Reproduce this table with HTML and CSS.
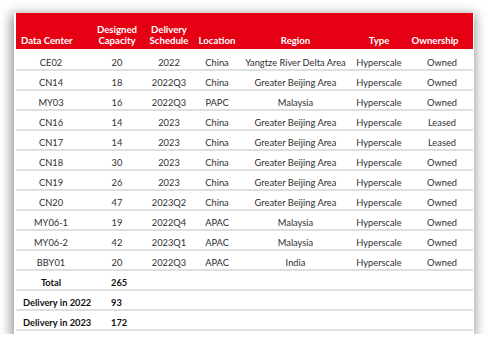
FILE: index.html
```html
<!DOCTYPE html>
<html lang="en">
<head>
    <meta charset="UTF-8">
    <title>Data Center Pipeline</title>
    <link rel="stylesheet" href="styles.css">
</head>
<body>
    <div class="sheet">
        <table class="dc-table">
            <colgroup>
                <col class="c-name">
                <col class="c-cap">
                <col class="c-sched">
                <col class="c-loc">
                <col class="c-region">
                <col class="c-type">
                <col class="c-own">
            </colgroup>
            <thead>
                <tr>
                    <th class="th-left">Data Center</th>
                    <th>Designed<br>Capacity</th>
                    <th>Delivery<br>Schedule</th>
                    <th>Location</th>
                    <th>Region</th>
                    <th>Type</th>
                    <th class="th-own">Ownership</th>
                </tr>
            </thead>
            <tbody>
                <tr><td>CE02</td><td>20</td><td>2022</td><td>China</td><td>Yangtze River Delta Area</td><td>Hyperscale</td><td>Owned</td></tr>
                <tr><td>CN14</td><td>18</td><td>2022Q3</td><td>China</td><td>Greater Beijing Area</td><td>Hyperscale</td><td>Owned</td></tr>
                <tr><td>MY03</td><td>16</td><td>2022Q3</td><td>PAPC</td><td>Malaysia</td><td>Hyperscale</td><td>Owned</td></tr>
                <tr><td>CN16</td><td>14</td><td>2023</td><td>China</td><td>Greater Beijing Area</td><td>Hyperscale</td><td>Leased</td></tr>
                <tr><td>CN17</td><td>14</td><td>2023</td><td>China</td><td>Greater Beijing Area</td><td>Hyperscale</td><td>Leased</td></tr>
                <tr><td>CN18</td><td>30</td><td>2023</td><td>China</td><td>Greater Beijing Area</td><td>Hyperscale</td><td>Owned</td></tr>
                <tr><td>CN19</td><td>26</td><td>2023</td><td>China</td><td>Greater Beijing Area</td><td>Hyperscale</td><td>Owned</td></tr>
                <tr><td>CN20</td><td>47</td><td>2023Q2</td><td>China</td><td>Greater Beijing Area</td><td>Hyperscale</td><td>Owned</td></tr>
                <tr><td>MY06-1</td><td>19</td><td>2022Q4</td><td>APAC</td><td>Malaysia</td><td>Hyperscale</td><td>Owned</td></tr>
                <tr><td>MY06-2</td><td>42</td><td>2023Q1</td><td>APAC</td><td>Malaysia</td><td>Hyperscale</td><td>Owned</td></tr>
                <tr><td>BBY01</td><td>20</td><td>2022Q3</td><td>APAC</td><td>India</td><td>Hyperscale</td><td>Owned</td></tr>
                <tr class="sum"><td>Total</td><td class="num">265</td><td></td><td></td><td></td><td></td><td></td></tr>
                <tr class="sum"><td class="lbl">Delivery in 2022</td><td class="num">93</td><td></td><td></td><td></td><td></td><td></td></tr>
                <tr class="sum"><td class="lbl">Delivery in 2023</td><td class="num">172</td><td></td><td></td><td></td><td></td><td></td></tr>
            </tbody>
        </table>
    </div>
</body>
</html>
```

FILE: styles.css
```css
:root {
    --red: #e60013;
    --rule: #dce1de;
    --text: #2f2f2f;
}

* {
    margin: 0;
    padding: 0;
    box-sizing: border-box;
}

body {
    background: #ffffff;
    font-family: Lato, 'Liberation Sans', sans-serif;
    padding: 13px 0 0 14px;
}

.sheet {
    width: 460px;
    height: 321px;
    background: #ffffff;
    padding: 0 1px 0 2px;
    box-shadow: -1px 3px 11px 2px rgba(0, 0, 0, 0.42);
}

.dc-table {
    width: 457px;
    border-collapse: collapse;
    table-layout: fixed;
}

.c-name { width: 70px; }
.c-cap { width: 62px; }
.c-sched { width: 42px; }
.c-loc { width: 54px; }
.c-region { width: 103px; }
.c-type { width: 64px; }
.c-own { width: 62px; }

.dc-table th {
    background: var(--red);
    color: #ffffff;
    font-weight: 700;
    font-size: 9.6px;
    line-height: 11px;
    height: 36px;
    vertical-align: bottom;
    padding: 0 0 3px;
    text-align: center;
    white-space: nowrap;
}

.dc-table th.th-left {
    text-align: left;
    padding-left: 5px;
}

.dc-table th.th-own {
    padding-right: 14px;
}

.dc-table td {
    height: 20px;
    font-size: 9.3px;
    line-height: 11px;
    color: var(--text);
    text-align: center;
    vertical-align: bottom;
    padding: 0 0 1px;
    border-bottom: 2px solid var(--rule);
    white-space: nowrap;
}

.dc-table tbody tr:first-child td {
    height: 21px;
}

.sum td {
    font-weight: 700;
    color: #111111;
}

.sum td.lbl {
    text-align: left;
    padding-left: 7px;
}

.sum td.num {
    text-align: left;
    padding-left: 25px;
}
```
